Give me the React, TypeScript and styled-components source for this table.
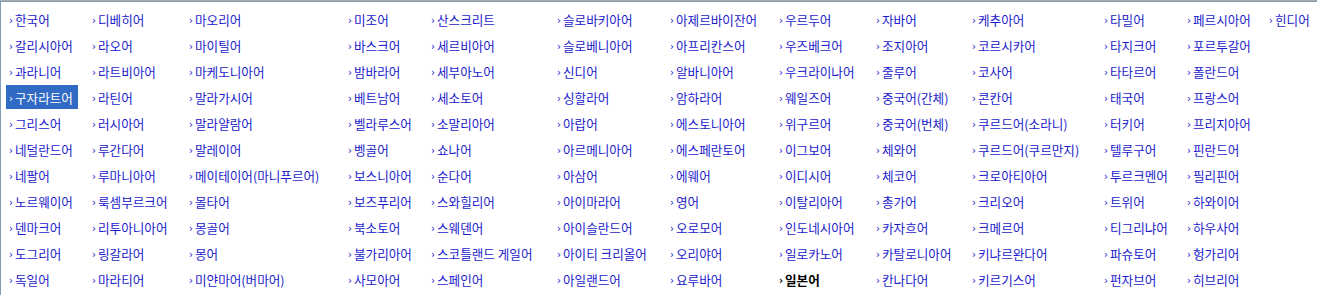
import React from "react";
import styled, { createGlobalStyle } from "styled-components";

const columns: string[][] = [
  ["한국어", "갈리시아어", "과라니어", "구자라트어", "그리스어", "네덜란드어", "네팔어", "노르웨이어", "덴마크어", "도그리어", "독일어"],
  ["디베히어", "라오어", "라트비아어", "라틴어", "러시아어", "루간다어", "루마니아어", "룩셈부르크어", "리투아니아어", "링갈라어", "마라티어"],
  ["마오리어", "마이틸어", "마케도니아어", "말라가시어", "말라얄람어", "말레이어", "메이테이어(마니푸르어)", "몰타어", "몽골어", "몽어", "미얀마어(버마어)"],
  ["미조어", "바스크어", "밤바라어", "베트남어", "벨라루스어", "벵골어", "보스니아어", "보즈푸리어", "북소토어", "불가리아어", "사모아어"],
  ["산스크리트", "세르비아어", "세부아노어", "세소토어", "소말리아어", "쇼나어", "순다어", "스와힐리어", "스웨덴어", "스코틀랜드 게일어", "스페인어"],
  ["슬로바키아어", "슬로베니아어", "신디어", "싱할라어", "아랍어", "아르메니아어", "아삼어", "아이마라어", "아이슬란드어", "아이티 크리올어", "아일랜드어"],
  ["아제르바이잔어", "아프리칸스어", "알바니아어", "암하라어", "에스토니아어", "에스페란토어", "에웨어", "영어", "오로모어", "오리야어", "요루바어"],
  ["우르두어", "우즈베크어", "우크라이나어", "웨일즈어", "위구르어", "이그보어", "이디시어", "이탈리아어", "인도네시아어", "일로카노어", "일본어"],
  ["자바어", "조지아어", "줄루어", "중국어(간체)", "중국어(번체)", "체와어", "체코어", "총가어", "카자흐어", "카탈로니아어", "칸나다어"],
  ["케추아어", "코르시카어", "코사어", "콘칸어", "쿠르드어(소라니)", "쿠르드어(쿠르만지)", "크로아티아어", "크리오어", "크메르어", "키냐르완다어", "키르기스어"],
  ["타밀어", "타지크어", "타타르어", "태국어", "터키어", "텔루구어", "투르크멘어", "트위어", "티그리냐어", "파슈토어", "펀자브어"],
  ["페르시아어", "포르투갈어", "폴란드어", "프랑스어", "프리지아어", "핀란드어", "필리핀어", "하와이어", "하우사어", "헝가리어", "히브리어"],
  ["힌디어"],
];

const HOVERED = "구자라트어";
const CURRENT = "일본어";

const GlobalStyle = createGlobalStyle`
  body {
    margin: 0;
    background: #ffffff;
    font-family: "Noto Sans CJK KR", "Liberation Sans", sans-serif;
  }
`;

const Frame = styled.div`
  border-top: 1px solid #a8a8a8;
  width: 1317px;
  height: 294px;
  overflow: hidden;
`;

const Panel = styled.div`
  border-top: 1px solid #7f9db9;
  border-left: 1px solid #7f9db9;
  height: 100%;
  padding: 4px 0 0 5px;
  box-sizing: border-box;
`;

const Grid = styled.div`
  display: grid;
  grid-auto-flow: column;
  grid-template-rows: repeat(11, 26px);
  grid-template-columns: 83px 97px 159px 83px 126px 113px 109px 97px 96px 132px 83px 82px auto;
  align-items: center;
`;

const Item = styled.a<{ $active?: boolean; $current?: boolean }>`
  justify-self: start;
  display: inline-flex;
  align-items: center;
  height: 24px;
  padding: 0 5px 0 3px;
  font-size: 12.6px;
  white-space: nowrap;
  cursor: pointer;
  text-decoration: none;
  color: ${(p) => (p.$active ? "#ffffff" : p.$current ? "#000000" : "#1a1acc")};
  background: ${(p) => (p.$active ? "#316ac5" : "transparent")};
  font-weight: ${(p) => (p.$current ? "bold" : "normal")};
`;

const Chevron = styled.span`
  font-family: "DejaVu Sans", sans-serif;
  font-size: 10px;
  width: 6px;
  margin-right: 0;
  position: relative;
  top: 1px;
`;

export default function App() {
  return (
    <>
      <GlobalStyle />
      <Frame>
        <Panel>
          <Grid>
            {columns.map((col, ci) =>
              col.map((name, ri) => (
                <Item
                  key={`${ci}-${ri}`}
                  $active={name === HOVERED}
                  $current={name === CURRENT}
                  style={{ gridColumn: ci + 1, gridRow: ri + 1 }}
                >
                  <Chevron>›</Chevron>
                  {name}
                </Item>
              ))
            )}
          </Grid>
        </Panel>
      </Frame>
    </>
  );
}
